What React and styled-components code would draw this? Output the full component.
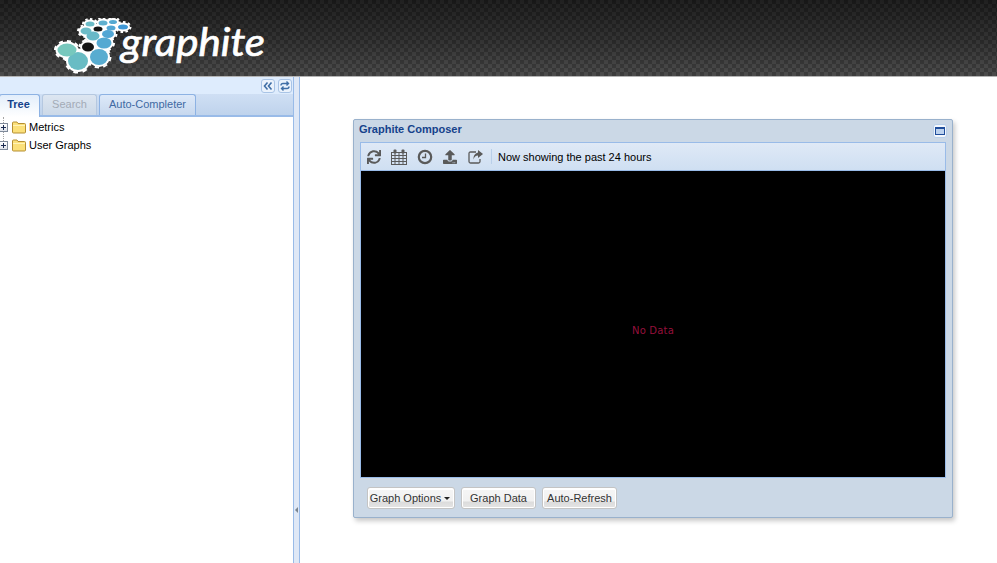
import React from "react";
import styled, { createGlobalStyle } from "styled-components";
import { FaSync, FaUpload } from "react-icons/fa";

const GlobalStyle = createGlobalStyle`
  html, body {
    margin: 0;
    height: 100%;
    overflow: hidden;
    background: #fff;
    font-family: "Liberation Sans", Arial, sans-serif;
    font-size: 11px;
  }
`;

const Page = styled.div`
  width: 997px;
  height: 563px;
  display: flex;
  flex-direction: column;
`;

const Header = styled.header`
  height: 77px;
  flex: none;
  box-sizing: border-box;
  padding: 18px 0 0 52px;
  border-bottom: 1px solid #b4b4b4;
  background:
    repeating-conic-gradient(rgba(0, 0, 0, 0.16) 0 25%, rgba(255, 255, 255, 0.02) 0 50%) 0 0 / 8px 8px,
    linear-gradient(#1c1c1c, #303030 55%, #484848);
`;

const Body = styled.div`
  flex: 1;
  display: flex;
  min-height: 0;
`;

const Side = styled.aside`
  width: 293px;
  flex: none;
  display: flex;
  flex-direction: column;
  background: #fff;
`;

const SideTop = styled.div`
  height: 16px;
  background: #deecfd;
  display: flex;
  justify-content: flex-end;
  align-items: center;
  gap: 3px;
  padding: 1px 1px 0 0;
`;

const ToolBtn = styled.button`
  width: 14px;
  height: 14px;
  padding: 0;
  display: flex;
  align-items: center;
  justify-content: center;
  border: 1px solid #a9c4e6;
  border-radius: 3px;
  background: #eaf2fc;
  color: #3f6ea6;
`;

const TabStrip = styled.div`
  height: 21px;
  display: flex;
  align-items: flex-end;
  gap: 2px;
  background: linear-gradient(#cfdff4, #bfd3ec);
  border-bottom: 2px solid #99bbe8;
`;

const Tab = styled.div`
  height: ${(p) => (p.$active ? "23px" : "21px")};
  margin-bottom: ${(p) => (p.$active ? "-2px" : "0")};
  width: ${(p) => p.$w}px;
  margin-left: ${(p) => p.$ml || 0}px;
  box-sizing: border-box;
  display: flex;
  align-items: center;
  justify-content: center;
  padding-bottom: ${(p) => (p.$active ? "5px" : "3px")};
  padding-right: ${(p) => (p.$active ? "2px" : "0")};
  border: 1px solid ${(p) => (p.$disabled ? "#b5c8e0" : "#8db2e3")};
  border-bottom: none;
  border-radius: 3px 3px 0 0;
  font-size: 11px;
  font-weight: ${(p) => (p.$active ? "bold" : "normal")};
  color: ${(p) => (p.$active ? "#15428b" : p.$disabled ? "#a3abb6" : "#416aa3")};
  background: ${(p) =>
    p.$active
      ? "linear-gradient(#e3eefb, #fff)"
      : p.$disabled
        ? "linear-gradient(#dde6f1, #ccd9e8)"
        : "linear-gradient(#dde9f9, #c7d8ee)"};
`;

const Tree = styled.div`
  padding-top: 1px;
  position: relative;
  &::before {
    content: "";
    position: absolute;
    left: 3px;
    top: 0;
    height: 28px;
    border-left: 1px dotted #a5a5a5;
  }
`;

const TreeRow = styled.div`
  height: 18px;
  display: flex;
  align-items: center;
  color: #000;
  font-size: 11px;
  white-space: nowrap;
  position: relative;
`;

const Expander = styled.span`
  width: 9px;
  height: 9px;
  margin-left: -1px;
  margin-right: 3px;
  box-sizing: border-box;
  border: 1px solid #7f8a9a;
  background: linear-gradient(#fff, #dfe3ea);
  position: relative;
  flex: none;
  &::before {
    content: "";
    position: absolute;
    left: 1px;
    right: 1px;
    top: 3px;
    height: 1px;
    background: #1a2a50;
  }
  &::after {
    content: "";
    position: absolute;
    top: 1px;
    bottom: 1px;
    left: 3px;
    width: 1px;
    background: #1a2a50;
  }
`;

const FolderSlot = styled.span`
  width: 16px;
  height: 13px;
  margin-right: 2px;
  flex: none;
  display: flex;
`;

const Splitter = styled.div`
  width: 5px;
  flex: none;
  border-left: 1px solid #99bbe8;
  border-right: 1px solid #99bbe8;
  background: #dfe8f6;
  display: flex;
  align-items: flex-end;
  justify-content: center;
  padding-bottom: 50px;
  &::after {
    content: "";
    width: 0;
    height: 0;
    border-top: 3px solid transparent;
    border-bottom: 3px solid transparent;
    border-right: 3px solid #7a8590;
  }
`;

const Canvas = styled.main`
  flex: 1;
  background: #fff;
  padding: 42px 0 0 53px;
`;

const Win = styled.section`
  width: 600px;
  height: 399px;
  box-sizing: border-box;
  border: 1px solid #99b1cc;
  border-radius: 2px;
  background: #cbd8e6;
  box-shadow: 2px 3px 5px rgba(0, 0, 0, 0.22);
  display: flex;
  flex-direction: column;
  padding: 0 6px;
`;

const WinTitle = styled.div`
  height: 22px;
  flex: none;
  box-sizing: border-box;
  display: flex;
  align-items: center;
  justify-content: space-between;
  font-weight: bold;
  color: #15428b;
  font-size: 11px;
  padding: 0 0 4px 0;
  margin: 0 -1px 0 -1px;
`;

const MinBtn = styled.span`
  width: 14px;
  height: 14px;
  box-sizing: border-box;
  border: 1px solid #b8cfea;
  border-radius: 3px;
  background: #f3f7fc;
  display: flex;
  align-items: center;
  justify-content: center;
  margin-top: 3px;
  &::after {
    content: "";
    width: 10px;
    height: 8px;
    box-sizing: border-box;
    border: 1px solid #1f4e9c;
    border-top-width: 2px;
    background: #bcd2ef;
  }
`;

const Toolbar = styled.div`
  height: 28px;
  flex: none;
  box-sizing: border-box;
  border: 1px solid #99bbe8;
  border-bottom: none;
  background: linear-gradient(#dfe9f6, #cfdff2);
  display: flex;
  align-items: center;
  padding-left: 5px;
  color: #000;
  font-size: 11px;
`;

const IconSlot = styled.span`
  width: 16px;
  height: 16px;
  margin-right: 9.4px;
  display: flex;
  align-items: center;
  justify-content: center;
  color: #5a5a5a;
  flex: none;
`;

const Sep = styled.span`
  width: 1px;
  height: 15px;
  background: #b9cfe9;
  margin: 0 6px 0 -2px;
`;

const Graph = styled.div`
  flex: 1;
  min-height: 0;
  border: 1px solid #99bbe8;
  background: #000;
  display: flex;
  align-items: center;
  justify-content: center;
  color: #96103c;
  font-family: "DejaVu Sans", sans-serif;
  font-size: 10px;
  letter-spacing: 0.2px;
  padding-top: 13px;
`;

const Footer = styled.div`
  height: 39px;
  flex: none;
  box-sizing: border-box;
  display: flex;
  align-items: flex-start;
  gap: 6px;
  padding: 9px 0 0 7px;
`;

const Btn = styled.div`
  height: 22px;
  box-sizing: border-box;
  width: ${(p) => p.$w}px;
  padding-right: ${(p) => p.$pr || 0}px;
  border: 1px solid #c4c4c4;
  border-radius: 3px;
  box-shadow: inset 0 0 0 1px #fff;
  background: linear-gradient(#fff 0 2px, #f5f5f5 2px, #f1f1f1 13px, #dcdcdc 14px, #e4e4e4);
  display: flex;
  align-items: center;
  justify-content: center;
  gap: 3px;
  color: #333;
  font-size: 11px;
  white-space: nowrap;
`;

const Caret = styled.span`
  width: 0;
  height: 0;
  border-left: 3px solid transparent;
  border-right: 3px solid transparent;
  border-top: 3px solid #222;
`;

const Folder = () => (
  <svg width="16" height="13" viewBox="0 0 16 13">
    <path d="M1.5 3V2q0-1 1-1h3.5l1 1.5h6.5q1 0 1 1V11q0 1-1 1h-11q-1 0-1-1z" fill="#fbe07a" stroke="#b58f33" />
    <path d="M2 4.5h12" stroke="#fff3b8" />
  </svg>
);

const Calendar = () => (
  <svg width="16" height="16" viewBox="0 0 16 16" fill="none" stroke="#5a5a5a">
    <rect x="0.5" y="3.5" width="15" height="12" />
    <path d="M0.5 6.5h15M0.5 9.5h15M0.5 12.5h15M4 3.5v12M8 3.5v12M12 3.5v12" />
    <rect x="2.5" y="0.5" width="3" height="4" rx="1" fill="#5a5a5a" stroke="none" />
    <rect x="10.5" y="0.5" width="3" height="4" rx="1" fill="#5a5a5a" stroke="none" />
  </svg>
);

const Clock = () => (
  <svg width="16" height="16" viewBox="0 0 16 16" fill="none" stroke="#5a5a5a">
    <circle cx="8" cy="8" r="6.2" strokeWidth="2.2" />
    <path d="M8.5 4.5V8.5H5" strokeWidth="1.3" />
  </svg>
);

const Share = () => (
  <svg width="16" height="16" viewBox="0 0 16 16">
    <path d="M8 3H2.5Q1 3 1 4.5v8Q1 14 2.5 14h8q1.5 0 1.5-1.5V10" fill="none" stroke="#5a5a5a" strokeWidth="1.3" />
    <path d="M10 1l5 4-5 4V6.6Q6.5 6.6 5.5 10.5 5 5 10 3.6z" fill="#5a5a5a" />
  </svg>
);

const gears = [
  [78, 61, 10, 9, "#69bcc4"],
  [99, 57, 9, 8, "#58acd0"],
  [67, 50, 9.5, 6.5, "#77c8bd"],
  [104, 43, 7.5, 5.5, "#55a9d2"],
  [93, 36, 6.5, 4.5, "#68b8c8"],
  [108, 34, 6, 4, "#52a6d4"],
  [86, 31, 5.5, 3.5, "#6cbcc8"],
  [90, 24, 4.5, 2.5, "#6cbcc8"],
  [103, 23, 4.5, 2.5, "#5fb0cf"],
  [111, 28, 4.5, 2.5, "#52a6d4"],
  [113, 22, 4, 2, "#55a9d2"],
  [123, 27, 5, 2.5, "#3f98d6"],
];

const holes = [
  [88, 47, 6, 4.5],
  [98, 29, 4.5, 2.5],
];

const Logo = () => (
  <svg width="220" height="58" viewBox="52 18 220 58" style={{ display: "block" }}>
    {[...gears, ...holes].map(([x, y, rx, ry], i) => (
      <g key={i} fill="#fff">
        <ellipse cx={x} cy={y} rx={rx + 2} ry={ry + 2} />
        <ellipse
          cx={x}
          cy={y}
          rx={rx + 2.5}
          ry={ry + 2.5}
          fill="none"
          stroke="#fff"
          strokeWidth="2"
          pathLength="16"
          strokeDasharray="1 1"
        />
      </g>
    ))}
    {holes.map(([x, y, rx, ry], i) => (
      <ellipse key={i} cx={x} cy={y} rx={rx} ry={ry} fill="#161616" />
    ))}
    {gears.map(([x, y, rx, ry, c], i) => (
      <ellipse key={i} cx={x} cy={y} rx={rx} ry={ry} fill={c} />
    ))}
    <text
      x="121"
      y="56"
      fill="#fff"
      stroke="#fff"
      strokeWidth="0.7"
      fontFamily="Lato, sans-serif"
      fontStyle="italic"
      fontSize="38"
      textLength="144"
      lengthAdjust="spacingAndGlyphs"
    >
      graphite
    </text>
  </svg>
);

export default function App() {
  return (
    <Page>
      <GlobalStyle />
      <Header>
        <Logo />
      </Header>
      <Body>
        <Side>
          <SideTop>
            <ToolBtn>
              <svg width="10" height="10" viewBox="0 0 10 10" fill="none" stroke="#3f6ea6" strokeWidth="1.6">
                <path d="M4.5 1.5L1.5 5l3 3.5M8.5 1.5L5.5 5l3 3.5" />
              </svg>
            </ToolBtn>
            <ToolBtn>
              <svg width="10" height="10" viewBox="0 0 10 10" fill="none" stroke="#3f6ea6" strokeWidth="1.4">
                <path d="M1 4.5Q1 2.5 3 2.5h5M6.5 .5l2 2-2 2M9 5.5Q9 7.5 7 7.5H2M3.5 5.5l-2 2 2 2" />
              </svg>
            </ToolBtn>
          </SideTop>
          <TabStrip>
            <Tab $active $w={41} $ml={-1}>Tree</Tab>
            <Tab $disabled $w={55}>Search</Tab>
            <Tab $w={97}>Auto-Completer</Tab>
          </TabStrip>
          <Tree>
            <TreeRow>
              <Expander />
              <FolderSlot><Folder /></FolderSlot>
              Metrics
            </TreeRow>
            <TreeRow>
              <Expander />
              <FolderSlot><Folder /></FolderSlot>
              User Graphs
            </TreeRow>
          </Tree>
        </Side>
        <Splitter />
        <Canvas>
          <Win>
            <WinTitle>
              Graphite Composer
              <MinBtn />
            </WinTitle>
            <Toolbar>
              <IconSlot><FaSync size={14} /></IconSlot>
              <IconSlot><Calendar /></IconSlot>
              <IconSlot><Clock /></IconSlot>
              <IconSlot><FaUpload size={14} /></IconSlot>
              <IconSlot><Share /></IconSlot>
              <Sep />
              Now showing the past 24 hours
            </Toolbar>
            <Graph>No Data</Graph>
            <Footer>
              <Btn $w={88} $pr={2}>Graph Options<Caret /></Btn>
              <Btn $w={75}>Graph Data</Btn>
              <Btn $w={75}>Auto-Refresh</Btn>
            </Footer>
          </Win>
        </Canvas>
      </Body>
    </Page>
  );
}
